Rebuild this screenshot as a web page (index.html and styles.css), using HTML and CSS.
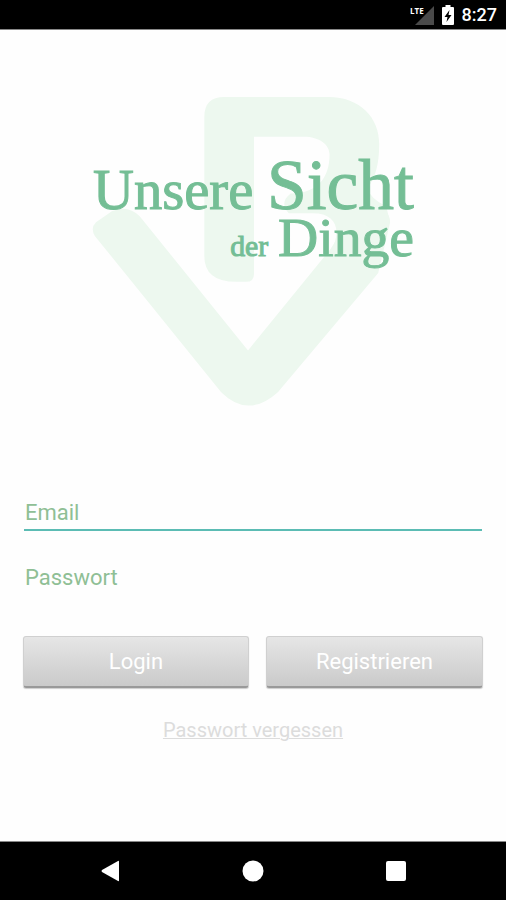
FILE: index.html
```html
<!DOCTYPE html>
<html lang="de">
<head>
    <meta charset="UTF-8">
    <meta name="viewport" content="width=device-width, initial-scale=1.0">
    <title>Unsere Sicht der Dinge</title>
    <link rel="stylesheet" href="styles.css">
</head>
<body>
    <header class="status-bar">
        <svg class="icon-signal" width="24" height="20" viewBox="0 0 24 20" aria-hidden="true">
            <path d="M24 1V20H5z" fill="#4a4a4a"/>
            <text class="signal-label" x="0" y="9">LTE</text>
        </svg>
        <svg class="icon-battery" width="12" height="20" viewBox="0 0 12 20" aria-hidden="true">
            <path d="M3.5 0h5v2H11q1 0 1 1v16q0 1-1 1H1q-1 0-1-1V3q0-1 1-1h2.500z" fill="#fff"/>
            <path d="M7.500 5L2.500 12h3l-1 5 5-7h-3z" fill="#000"/>
        </svg>
        <span class="clock">8:27</span>
    </header>

    <main>
        <h1 class="logo">
            <svg viewBox="0 0 324 312" role="img" aria-label="Unsere Sicht der Dinge">
                <!-- B -->
                <path class="mark" d="M113 20Q113 0 133 0H238C270 0 289 21 289 47C289 66 286 80 277 92Q280 102 296 110L300 126L240 156C252 134 246 117 222 117H198Q188 106 200 97C226 97 239 82 239 58C239 48 229 40 213 40H163V178Q163 186 155 186H145Q113 186 113 160z"/>
                <!-- V -->
                <path class="mark" d="M4 126L20 115Q36 108 48 120L157 255L240 153L274 100Q300 112 300 126L288 177L187 297Q157 324 130 297L3 140Q-2 132 4 126z"/>
                <text class="word" x="1" y="113" font-size="57">Unsere</text>
                <text class="word" x="324" y="113" font-size="72" text-anchor="end">Sicht</text>
                <text class="word" x="139" y="160" font-size="30">der</text>
                <text class="word" x="324" y="160" font-size="56" text-anchor="end">Dinge</text>
            </svg>
        </h1>

        <form class="login-form">
            <input class="field active" type="email" placeholder="Email" aria-label="Email">
            <input class="field" type="password" placeholder="Passwort" aria-label="Passwort">
            <div class="buttons">
                <button class="login" type="submit">Login</button>
                <button class="register" type="button">Registrieren</button>
            </div>
            <a class="forgot" href="#">Passwort vergessen</a>
        </form>
    </main>

    <nav class="nav-bar">
        <button type="button" aria-label="Zurück">
            <svg width="22" height="22" viewBox="0 0 22 22"><path d="M20 1.500v19q0 1-1 .500L3 12q-1-1 0-2L19 1q1-.5 1 .5z"/></svg>
        </button>
        <button type="button" aria-label="Startseite">
            <svg width="22" height="22" viewBox="0 0 22 22"><circle cx="11" cy="11" r="10.500"/></svg>
        </button>
        <button type="button" aria-label="Übersicht">
            <svg width="22" height="22" viewBox="0 0 22 22"><rect x="1" y="1" width="20" height="20" rx="2"/></svg>
        </button>
    </nav>
</body>
</html>
```

FILE: styles.css
```css
* {
    box-sizing: border-box;
}
body {
    font-family: Roboto, sans-serif;
    margin: 0;
    background-color: #fefefe;
    display: flex;
    flex-direction: column;
    min-height: 100vh;
}
.status-bar {
    display: flex;
    justify-content: flex-end;
    align-items: center;
    gap: 8px;
    height: 30px;
    padding: 0 9px;
    background-color: #000;
    border-bottom: 1px solid #888;
    color: #fff;
}
.signal-label {
    font-family: "Open Sans", sans-serif;
    font-size: 8px;
    font-weight: bold;
    fill: #fff;
}
.clock {
    font-size: 18px;
    font-weight: 500;
    line-height: 24px;
}
main {
    flex: 1;
    display: flex;
    flex-direction: column;
    padding: 67px 23px 0;
}
.logo {
    width: 70%;
    margin: 0 auto 88px;
}
.logo svg {
    display: block;
    width: 100%;
    overflow: visible;
}
.mark {
    fill: #edf8ef;
}
.word {
    font-family: "Liberation Serif", serif;
    font-weight: normal;
    fill: #74be95;
    stroke: #74be95;
    stroke-width: 1px;
}
.login-form {
    display: flex;
    flex-direction: column;
}
.field {
    height: 36px;
    margin: 0 1px 29px;
    padding: 0 1px;
    border: none;
    border-bottom: 2px solid transparent;
    background: none;
    font-family: inherit;
    font-size: 22px;
    color: #8fbf95;
    outline: none;
}
.field::placeholder {
    color: #8fbf95;
    opacity: 1;
}
.field.active {
    border-bottom-color: #5bbcb4;
}
.buttons {
    display: flex;
    gap: 17px;
    margin-top: 11px;
}
.buttons button {
    height: 52px;
    padding: 0;
    border: 1px solid #d0d0d0;
    border-bottom: 2px solid #999;
    border-radius: 3px;
    background: linear-gradient(#e6e6e6, #cacaca);
    box-shadow: 0 1px 1px #ccc;
    font-family: inherit;
    font-size: 22px;
    color: #fff;
}
.buttons .login {
    flex: 51;
}
.buttons .register {
    flex: 49;
}
.forgot {
    align-self: center;
    margin-top: 30px;
    font-size: 20px;
    line-height: 24px;
    color: #dcdcdc;
    text-decoration-thickness: 1px;
}
.nav-bar {
    display: flex;
    justify-content: center;
    gap: 99px;
    height: 59px;
    background-color: #000;
    border-top: 1px solid #888;
}
.nav-bar button {
    width: 44px;
    padding: 0;
    border: none;
    background: none;
}
.nav-bar svg {
    display: block;
    margin: auto;
    fill: #fff;
}
```
